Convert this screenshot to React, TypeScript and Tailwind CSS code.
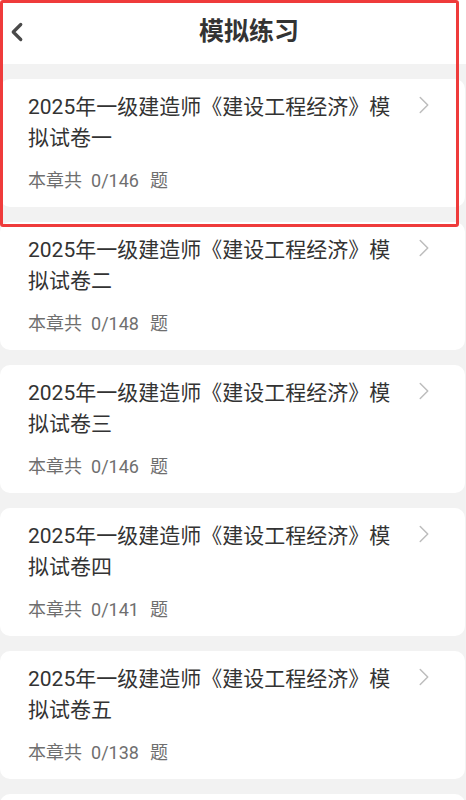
import { ChevronLeft, ChevronRight } from 'lucide-react';

const papers = [
  { name: '一', done: 0, total: 146 },
  { name: '二', done: 0, total: 148 },
  { name: '三', done: 0, total: 146 },
  { name: '四', done: 0, total: 141 },
  { name: '五', done: 0, total: 138 },
];

const font = { fontFamily: 'Roboto, "Noto Sans CJK SC", sans-serif' };

export default function App() {
  return (
    <main className="relative h-screen bg-[#f2f2f2] overflow-hidden" style={font}>
      {/* HEADER */}
      <header className="h-[64px] bg-white flex items-center">
        <div className="w-[32px] flex justify-center pl-[2px]">
          <ChevronLeft className="w-[30px] h-[30px] text-[#4a4a4a]" strokeWidth={2.6} />
        </div>
        <h1 className="flex-1 text-center text-[25px] font-bold text-[#333]">模拟练习</h1>
      </header>

      {/* PAPER LIST */}
      <div className="pt-[15px] flex flex-col gap-[15px]">
        {papers.map((p) => (
          <div key={p.name} className="h-[128px] mr-[1px] bg-white rounded-[10px] flex pl-[28px] pr-[26px] pt-[13px]">
            <div className="flex-1 min-w-0 mr-[10px]">
              <p className="text-[21px] leading-[31px] text-[#333]">
                2025年一级建造师《建设工程经济》模拟试卷{p.name}
              </p>
              <p className="mt-[15px] text-[18px] leading-[24px] text-[#6f6f6f] flex">
                <span>本章共</span>
                <span className="ml-[9px]">{p.done}/{p.total}</span>
                <span className="ml-[11px]">题</span>
              </p>
            </div>
            <ChevronRight className="w-[30px] h-[30px] -mt-[2px] shrink-0 text-[#bdbdbd]" strokeWidth={1.2} />
          </div>
        ))}
        {/* next card peeking in at the bottom */}
        <div className="h-[128px] mr-[1px] bg-white rounded-[10px]" />
      </div>

      {/* highlight frame */}
      <div className="absolute left-0 top-0 w-[459px] h-[227px] border-[3px] border-[#ef3b3b] rounded-[3px] pointer-events-none" />
    </main>
  );
}
